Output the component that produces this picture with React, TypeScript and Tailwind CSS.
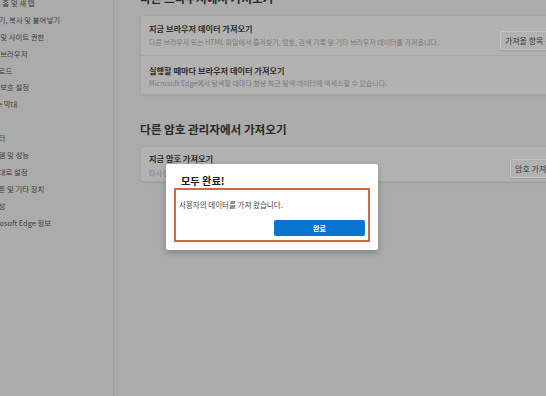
import React from 'react';

const font = { fontFamily: '"Noto Sans CJK KR", "Noto Sans", sans-serif' };

const navItems = [
  '시작, 홈 및 새 탭',
  '보내기, 복사 및 붙여넣기',
  '쿠키 및 사이트 권한',
  '기본 브라우저',
  '다운로드',
  '가족 보호 설정',
  'Edge 막대',
  '언어',
  '프린터',
  '시스템 및 성능',
  '원래대로 설정',
  '휴대폰 및 기타 장치',
  '접근성',
  'Microsoft Edge 정보',
];

function GhostButton({ label }: { label: string }) {
  return (
    <button className="shrink-0 h-[19px] px-[4px] border border-[#c4c4c4] rounded-[2px] bg-[#b2b2b2] shadow-[0_1px_1px_rgba(0,0,0,0.12)] text-[8px] leading-[17px] text-[#3a3a3a] whitespace-nowrap">
      {label}
    </button>
  );
}

export default function App() {
  return (
    <div className="relative w-[546px] h-[396px] overflow-hidden bg-[#ababab]" style={font}>
      <div className="flex h-full">
        {/* Sidebar (scrolled, left part cut) */}
        <aside className="w-[114px] shrink-0 h-full border-r border-[#9d9d9d] overflow-hidden">
          <ul className="mt-[-6px] ml-[-15px]">
            {navItems.map((item) => (
              <li key={item} className="h-[16.9px] leading-[17px] text-[7.4px] text-[#3b3b3b] whitespace-nowrap">
                {item}
              </li>
            ))}
          </ul>
        </aside>

        {/* Main */}
        <main className="pl-[26px] mt-[-10px]">
          <h2 className="text-[11.6px] leading-[16px] font-semibold text-[#2a2a2a] whitespace-nowrap">
            다른 브라우저에서 가져오기
          </h2>
          <div className="mt-[9px] w-[436px] bg-[#b2b2b2] border border-[#a6a6a6] rounded-[3px] shadow-[0_1px_2px_rgba(0,0,0,0.08)]">
            <div className="flex justify-between pl-[8px] pr-[10px] pt-[7px] pb-[5px] border-b border-[#a7a7a7]">
              <div>
                <div className="text-[8.2px] leading-[10px] font-semibold text-[#2e2e2e] whitespace-nowrap">
                  지금 브라우저 데이터 가져오기
                </div>
                <div className="mt-[4px] text-[7px] leading-[10px] text-[#7a7a7a] whitespace-nowrap">
                  다른 브라우저 또는 HTML 파일에서 즐겨찾기, 암호, 검색 기록 및 기타 브라우저 데이터를 가져옵니다.
                </div>
              </div>
              <div className="mt-[2px]">
                <GhostButton label="가져올 항목 선택" />
              </div>
            </div>
            <div className="pl-[8px] pt-[9px] pb-[6px]">
              <div className="text-[8.2px] leading-[10px] font-semibold text-[#2e2e2e] whitespace-nowrap">
                실행할 때마다 브라우저 데이터 가져오기
              </div>
              <div className="mt-[3px] text-[7px] leading-[10px] text-[#7a7a7a] whitespace-nowrap">
                Microsoft Edge에서 탐색할 때마다 항상 최근 탐색 데이터에 액세스할 수 있습니다.
              </div>
            </div>
          </div>

          <h2 className="mt-[26px] text-[11.6px] leading-[16px] font-semibold text-[#2a2a2a] whitespace-nowrap">
            다른 암호 관리자에서 가져오기
          </h2>
          <div className="mt-[9px] w-[436px] flex justify-between bg-[#b2b2b2] border border-[#a6a6a6] rounded-[3px] shadow-[0_1px_2px_rgba(0,0,0,0.08)] pl-[8px] pr-[9px] pt-[6px] pb-[3px]">
            <div>
              <div className="text-[8.2px] leading-[10px] font-semibold text-[#2e2e2e] whitespace-nowrap">
                지금 암호 가져오기
              </div>
              <div className="mt-[5px] text-[7px] leading-[10px] text-[#7a7a7a] whitespace-nowrap">
                타사 암호 관리자에서 저장된 암호를 가져옵니다.
              </div>
            </div>
            <div>
              <GhostButton label="암호 가져오기" />
            </div>
          </div>
        </main>
      </div>

      {/* Dialog */}
      <div className="absolute left-[166px] top-[164px] w-[212px] h-[86px] bg-white rounded-[2px] shadow-[0_2px_6px_rgba(0,0,0,0.25)]">
        <div className="pl-[15px] pt-[10px] text-[10.2px] leading-[14px] font-bold text-[#1b1b1b]">모두 완료!</div>
        <div className="mx-[8px] h-[54px] border-2 border-[#cc6a45] pl-[3px] pr-[3px] pt-[10px] pb-[4px]">
          <div className="text-[7.5px] leading-[10px] text-[#444444] whitespace-nowrap">
            사용자의 데이터를 가져 왔습니다.
          </div>
          <div className="mt-[10px] flex justify-end">
            <button className="w-[91px] h-[16px] bg-[#0a74d0] rounded-[2px] text-white text-[7px] leading-[16px] font-semibold">
              완료
            </button>
          </div>
        </div>
      </div>
    </div>
  );
}
